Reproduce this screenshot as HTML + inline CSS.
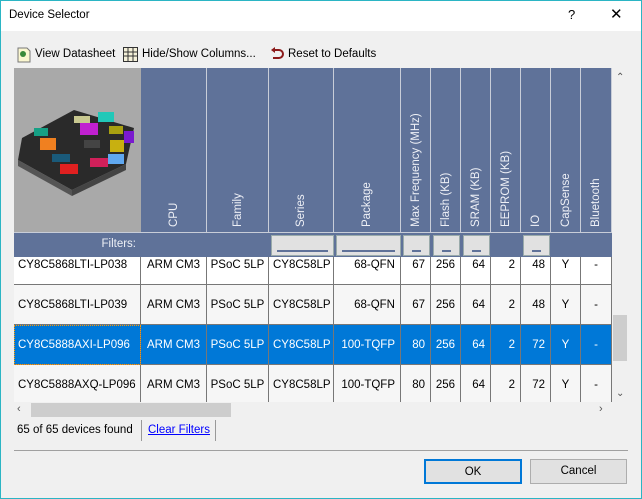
<!DOCTYPE html><html><head><style>
*{margin:0;padding:0;box-sizing:border-box}
body{width:642px;height:499px;background:#f0f0f0;font-family:"Liberation Sans",sans-serif;font-size:11.5px;color:#000;position:relative;overflow:hidden}
.a{position:absolute}
.frame{left:0;top:0;width:642px;height:499px;border:1px solid #2bb5c4}
.hd{background:#5f7299;border-right:1px solid #c8cdd8}
.vt{position:absolute;top:227px;left:50%;transform-origin:0 0;transform:rotate(-90deg);white-space:nowrap;color:#eef0f6;font-size:11.5px;line-height:14px}
.fb{background:#e1e1e1;border:1px solid #9aa;position:absolute;top:2px;height:21px}
.fb i{position:absolute;bottom:3px;left:5px;right:5px;height:2px;background:#5f7299}
.cell{position:absolute;height:40px;line-height:40px;border-right:1px solid #777;font-size:11.5px;white-space:nowrap;overflow:hidden}
.btn{position:absolute;background:#e1e1e1;border:1px solid #adadad;text-align:center;line-height:23px}
</style></head><body>
<div class="a" style="left:0;top:0;width:642px;height:31px;background:#fff"></div>
<div class="a" style="left:9px;top:9px;font-size:11.5px">Device Selector</div>
<div class="a" style="left:568px;top:7px;font-size:13px">?</div>
<div class="a" style="left:610px;top:5px;font-size:15px">✕</div>
<svg class="a" style="left:17px;top:47px" width="14" height="16"><path d="M1 1h9l3 3v11H1z" fill="#fbf7d0" stroke="#777"/><circle cx="6" cy="7" r="3" fill="#3a8a3a"/></svg>
<div class="a" style="left:35px;top:48px">View Datasheet</div>
<svg class="a" style="left:123px;top:47px" width="15" height="15"><rect x="0.5" y="0.5" width="14" height="14" fill="#f4f0d8" stroke="#333"/><path d="M1 5h13M1 9h13M5 1v13M10 1v13" stroke="#333"/></svg>
<div class="a" style="left:142px;top:48px">Hide/Show Columns...</div>
<svg class="a" style="left:270px;top:47px" width="14" height="15"><path d="M4 3h5a4 4 0 0 1 0 8H3" fill="none" stroke="#8b1a1a" stroke-width="2"/><path d="M1 3l4-3v6z" fill="#8b1a1a"/></svg>
<div class="a" style="left:288px;top:48px">Reset to Defaults</div>
<div class="a" style="left:14px;top:68px;width:614px;height:374px;background:#fff"></div>
<div class="a" style="left:14px;top:68px;width:127px;height:164px;background:#a9a9a9">
<svg width="127" height="164"><polygon points="8,70 60,42 120,60 112,96 58,122 4,92" fill="#2a2a2a"/><polygon points="4,92 58,122 58,128 4,98" fill="#555"/><polygon points="58,122 112,96 112,102 58,128" fill="#444"/>
<rect x="20" y="60" width="14" height="8" fill="#16a085"/><rect x="60" y="48" width="16" height="7" fill="#c8c890"/><rect x="84" y="44" width="16" height="10" fill="#22c8b8"/><rect x="66" y="55" width="18" height="12" fill="#c020d0"/><rect x="95" y="58" width="14" height="8" fill="#a8a010"/><rect x="110" y="63" width="10" height="12" fill="#7a1ad0"/><rect x="26" y="70" width="16" height="12" fill="#f08020"/><rect x="96" y="72" width="14" height="12" fill="#c8b010"/><rect x="70" y="72" width="16" height="8" fill="#444"/><rect x="38" y="86" width="18" height="8" fill="#1a5a7a"/><rect x="46" y="96" width="18" height="10" fill="#e02020"/><rect x="76" y="90" width="18" height="9" fill="#d0205a"/><rect x="94" y="86" width="16" height="10" fill="#60a8f0"/></svg></div>
<div class="a hd" style="left:141px;top:0;width:66px;height:232px;clip-path:inset(68px 0 0 0)"><span class="vt" style="margin-left:-7px">CPU</span></div>
<div class="a hd" style="left:207px;top:0;width:62px;height:232px;clip-path:inset(68px 0 0 0)"><span class="vt" style="margin-left:-7px">Family</span></div>
<div class="a hd" style="left:269px;top:0;width:65px;height:232px;clip-path:inset(68px 0 0 0)"><span class="vt" style="margin-left:-7px">Series</span></div>
<div class="a hd" style="left:334px;top:0;width:67px;height:232px;clip-path:inset(68px 0 0 0)"><span class="vt" style="margin-left:-7px">Package</span></div>
<div class="a hd" style="left:401px;top:0;width:30px;height:232px;clip-path:inset(68px 0 0 0)"><span class="vt" style="margin-left:-7px">Max Frequency (MHz)</span></div>
<div class="a hd" style="left:431px;top:0;width:30px;height:232px;clip-path:inset(68px 0 0 0)"><span class="vt" style="margin-left:-7px">Flash (KB)</span></div>
<div class="a hd" style="left:461px;top:0;width:30px;height:232px;clip-path:inset(68px 0 0 0)"><span class="vt" style="margin-left:-7px">SRAM (KB)</span></div>
<div class="a hd" style="left:491px;top:0;width:30px;height:232px;clip-path:inset(68px 0 0 0)"><span class="vt" style="margin-left:-7px">EEPROM (KB)</span></div>
<div class="a hd" style="left:521px;top:0;width:30px;height:232px;clip-path:inset(68px 0 0 0)"><span class="vt" style="margin-left:-7px">IO</span></div>
<div class="a hd" style="left:551px;top:0;width:30px;height:232px;clip-path:inset(68px 0 0 0)"><span class="vt" style="margin-left:-7px">CapSense</span></div>
<div class="a hd" style="left:581px;top:0;width:31px;height:232px;clip-path:inset(68px 0 0 0)"><span class="vt" style="margin-left:-7px">Bluetooth</span></div>
<div class="a" style="left:14px;top:232px;width:598px;height:25px;background:#5f7299;border-top:1px solid #c8cdd8">
<div class="a" style="right:476px;top:5px;color:#eef0f6">Filters:</div>
<div class="fb" style="left:257px;width:63px"><i></i></div>
<div class="fb" style="left:322px;width:65px"><i></i></div>
<div class="fb" style="left:389px;width:27px"><i style="left:8px;right:8px"></i></div>
<div class="fb" style="left:419px;width:27px"><i style="left:8px;right:8px"></i></div>
<div class="fb" style="left:449px;width:27px"><i style="left:8px;right:8px"></i></div>
<div class="fb" style="left:509px;width:27px"><i style="left:8px;right:8px"></i></div>
</div>
<div class="a" style="left:14px;top:257px;width:598px;height:145px;overflow:hidden">
<div id="rows"></div>
</div>
<script>
var d=[["CY8C5868LTI-LP038","68-QFN","67","48"],["CY8C5868LTI-LP039","68-QFN","67","48"],["CY8C5888AXI-LP096","100-TQFP","80","72"],["CY8C5888AXQ-LP096","100-TQFP","80","72"]];
var cols=[[0,127,"l"],[127,66,"c"],[193,62,"c"],[255,65,"l"],[320,67,"r"],[387,30,"r"],[417,30,"r"],[447,30,"r"],[477,30,"r"],[507,30,"r"],[537,30,"c"],[567,31,"c"]];
var h="";
d.forEach(function(r,i){var top=-12+i*40;var sel=i==2;var bg=sel?"#0078d7":(i%2?"#f6f6f6":"#fff");var col=sel?"#fff":"#000";
var v=[r[0],"ARM CM3","PSoC 5LP","CY8C58LP",r[1],r[2],"256","64","2",r[3],"Y","-"];
h+='<div style="position:absolute;left:0;top:'+top+'px;width:598px;height:40px;background:'+bg+';border-bottom:1px solid #777"></div>';
cols.forEach(function(c,j){var pad=c[2]=="l"?"padding-left:4px;":c[2]=="r"?"text-align:right;padding-right:5px;":"text-align:center;";
h+='<div class="cell" style="left:'+c[0]+'px;top:'+top+'px;width:'+c[1]+'px;color:'+col+';'+pad+(sel&&j==0?'outline:1px dotted #f90;outline-offset:-1px;':'')+'">'+v[j]+'</div>';});});
document.getElementById("rows").innerHTML=h;
</script>
<div class="a" style="left:612px;top:68px;width:16px;height:351px;background:#f0f0f0"></div>
<div class="a" style="left:616px;top:72px;font-size:10px;color:#555">⌃</div>
<div class="a" style="left:613px;top:315px;width:14px;height:46px;background:#cdcdcd"></div>
<div class="a" style="left:616px;top:388px;font-size:10px;color:#555">⌄</div>
<div class="a" style="left:14px;top:402px;width:598px;height:17px;background:#f0f0f0"></div>
<div class="a" style="left:17px;top:403px;font-size:11px;color:#555">‹</div>
<div class="a" style="left:31px;top:403px;width:200px;height:14px;background:#cdcdcd"></div>
<div class="a" style="left:599px;top:403px;font-size:11px;color:#555">›</div>
<div class="a" style="left:14px;top:419px;width:614px;height:23px;background:#f0f0f0"></div>
<div class="a" style="left:17px;top:424px">65 of 65 devices found</div>
<div class="a" style="left:141px;top:420px;width:1px;height:21px;background:#999"></div>
<div class="a" style="left:148px;top:424px;color:#00f;text-decoration:underline">Clear Filters</div>
<div class="a" style="left:215px;top:420px;width:1px;height:21px;background:#999"></div>
<div class="a" style="left:14px;top:450px;width:614px;height:1px;background:#a0a0a0"></div>
<div class="btn" style="left:424px;top:459px;width:98px;height:25px;border:2px solid #0078d7">OK</div>
<div class="btn" style="left:530px;top:459px;width:97px;height:25px">Cancel</div>
<div class="a frame"></div>
</body></html>
